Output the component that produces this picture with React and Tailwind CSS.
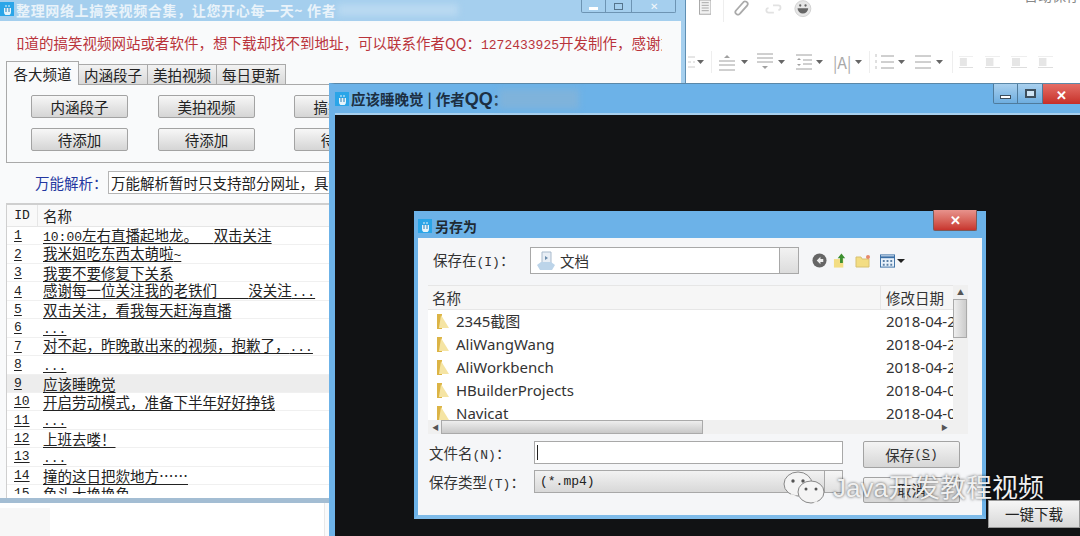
function WinIcon() {
  return (
    <div className="flex h-[14px] w-[14px] shrink-0 items-center justify-center bg-[#2aa5e8]">
      <svg width="9" height="11" viewBox="0 0 9 11">
        <path d="M1 4h7v4a3 3 0 0 1-7 0z" fill="#e6f4fb" />
        <path d="M3 4v4M6 4v4" stroke="#2a7fb5" strokeWidth="1" />
        <path d="M3 1v2M6 1v2" stroke="#e6f4fb" strokeWidth="1" />
      </svg>
    </div>
  );
}

function Mixed({ text }) {
  const parts = text.split(/([\x20-\x7e]+)/).filter(Boolean);
  return (
    <>
      {parts.map((p, i) =>
        /^[\x20-\x7e]+$/.test(p) ? (
          <span key={i} className="font-['Liberation_Mono',monospace] text-[13px]">{p}</span>
        ) : (
          <span key={i}>{p}</span>
        )
      )}
    </>
  );
}

function GrayBtn({ children, className }) {
  return (
    <div className={"flex h-[23px] w-[97px] shrink-0 items-center justify-center rounded-[2px] border border-[#a3a3a3] bg-gradient-to-b from-[#f7f7f7] to-[#d5d5d5] text-[14.5px] text-[#222] " + (className || "")}>
      {children}
    </div>
  );
}

const rows = [
  ["1", "10:00左右直播起地龙。  双击关注"],
  ["2", "我米姐吃东西太萌啦~"],
  ["3", "我要不要修复下关系"],
  ["4", "感谢每一位关注我的老铁们    没关注..."],
  ["5", "双击关注，看我每天赶海直播"],
  ["6", "..."],
  ["7", "对不起，昨晚敢出来的视频，抱歉了，..."],
  ["8", "..."],
  ["9", "应该睡晚觉"],
  ["10", "开启劳动模式，准备下半年好好挣钱"],
  ["11", "..."],
  ["12", "上班去喽！"],
  ["13", "..."],
  ["14", "撞的这日把欻地方⋯⋯"],
  ["15", "鱼头大换换鱼"],
];

function LeftWindow() {
  return (
    <div className="absolute left-0 top-0 h-[536px] w-[686px] overflow-hidden border-r border-r-[#5f8fb3]">
      <div className="flex h-full flex-col overflow-hidden border-r-4 border-r-[#a5cfee] bg-[#f9fafb]">
        <div className="flex h-[21px] shrink-0 items-start bg-[#a5cfee]">
          <div className="mt-[2px]"><WinIcon /></div>
          <span className="ml-[2px] mt-[1px] whitespace-nowrap text-[14px] font-bold leading-[18px] tracking-[0.65px] text-[#e9f3fa]">整理网络上搞笑视频合集，让您开心每一天~ 作者</span>
          <div className="ml-[2px] mt-[4px] h-[12px] w-[120px] bg-[#b9d9f1] blur-[3px]" />
          <div className="ml-auto mr-[5px] flex items-start">
            <div className="flex h-[13px] w-[25px] items-end justify-center rounded-bl-[2px] border border-t-0 border-[#6d94b3] bg-[#a5cfee] pb-[2px]"><div className="h-[3px] w-[9px] bg-white" /></div>
            <div className="flex h-[13px] w-[26px] items-center justify-center border border-l-0 border-t-0 border-[#6d94b3] bg-[#a5cfee]"><div className="h-[7px] w-[9px] border border-[#55748c]" /></div>
            <div className="flex h-[13px] w-[44px] items-center justify-center rounded-br-[2px] border border-l-0 border-t-0 border-[#6d94b3] bg-[#a5cfee] text-[10px] leading-none text-[#f2f7fb]">✕</div>
          </div>
        </div>
        <div className="ml-[17px] mt-[13px] h-[17px] w-[645px] shrink-0 overflow-hidden whitespace-nowrap text-[14.5px] leading-[17px] text-[#b9343b]">
          <div className="-ml-[7px]">知道的搞笑视频网站或者软件，想下载却找不到地址，可以联系作者QQ：<span className="font-['Liberation_Mono',monospace] text-[13px]">1272433925</span>开发制作，感谢支持</div>
        </div>
        <div className="ml-[6px] mt-[10px] flex h-[24px] shrink-0 items-end">
          <div className="relative z-10 flex h-[24px] w-[73px] items-center justify-center border border-b-0 border-[#a9a9a9] bg-[#f9fafb] text-[14.5px] text-[#222]">各大频道</div>
          {["内涵段子", "美拍视频", "每日更新"].map((t) => (
            <div key={t} className="flex h-[21px] w-[69px] items-center justify-center border border-l-0 border-[#a9a9a9] bg-gradient-to-b from-[#f2f2f2] to-[#d9d9d9] text-[14.5px] text-[#222]">{t}</div>
          ))}
        </div>
        <div className="-mt-px ml-[6px] h-[79px] w-[600px] shrink-0 border border-[#a9a9a9] pl-[24px] pt-[10px]">
          <div className="flex gap-[30px]">
            <GrayBtn>内涵段子</GrayBtn>
            <GrayBtn>美拍视频</GrayBtn>
            <GrayBtn className="ml-[9px]">搞笑视频</GrayBtn>
          </div>
          <div className="mt-[10px] flex gap-[30px]">
            <GrayBtn>待添加</GrayBtn>
            <GrayBtn>待添加</GrayBtn>
            <GrayBtn className="ml-[9px]">待添加</GrayBtn>
          </div>
        </div>
        <div className="ml-[35px] mt-[8px] flex shrink-0 items-center">
          <span className="w-[73px] whitespace-nowrap text-[14.5px] text-[#2437a0]">万能解析：</span>
          <div className="h-[23px] w-[400px] overflow-hidden whitespace-nowrap border border-[#b5b5b5] bg-white pl-[2px] text-[14.5px] leading-[21px] text-[#222]">万能解析暂时只支持部分网址，具体支持网址请看说明</div>
        </div>
        <div className="ml-[6px] mt-[9px] shrink-0 border-l border-t-2 border-[#cfcfcf] bg-white pb-[4px]">
          <div className="flex h-[22px] items-center border-b border-[#e6e6e6] bg-[#f9f9f9] text-[14.5px] text-[#222]">
            <div className="flex h-full w-[31px] items-center justify-center border-r border-[#e6e6e6] font-['Liberation_Mono',monospace] text-[13px]">ID</div>
            <div className="pl-[5px]">名称</div>
          </div>
          <div className="h-[267px] overflow-hidden">
            {rows.map(([id, name]) => (
              <div key={id} className={id === "9" ? "flex h-[18.45px] items-center border-b border-[#f0f0f0] bg-[#ededed] text-[14.5px] leading-[17px] text-[#222]" : "flex h-[18.45px] items-center border-b border-[#f0f0f0] text-[14.5px] leading-[17px] text-[#222]"}>
                <div className="w-[31px] pl-[7px] font-['Liberation_Mono',monospace] text-[13px] underline underline-offset-[2px]">{id}</div>
                <div className="whitespace-pre pl-[5px] underline underline-offset-[2px]"><Mixed text={name} /></div>
              </div>
            ))}
          </div>
        </div>
        <div className="h-[5px] shrink-0 bg-[#a3bdd3]" />
        <div className="h-full w-[325px] border-r border-[#e8e8e8] bg-white pt-[5px]">
          <div className="h-full w-[50px] bg-[#f7f7f7]" />
        </div>
      </div>
    </div>
  );
}

function Caret({ className }) {
  return (
    <svg width="7" height="4" viewBox="0 0 7 4" className={className}>
      <path d="M0 0h7L3.500 4z" fill="#666" />
    </svg>
  );
}

function Sep({ className }) {
  return <div className={"h-[22px] w-px bg-[#eee] " + className} />;
}

function Toolbar() {
  const c = "#a0a0a0";
  return (
    <div className="absolute left-[686px] top-0 h-[83px] w-[394px] overflow-hidden bg-white">
      <div className="flex h-[20px] items-start">
        <svg width="14" height="16" viewBox="0 0 14 16" className="ml-[13px]">
          <rect x="0.500" y="-1" width="13" height="16" fill="#f2f2f2" stroke={c} />
          <path d="M3 2h8M3 5h8M3 8h8M3 11h8" stroke={c} />
        </svg>
        <div className="ml-[12px] h-[22px] w-px bg-[#eee]" />
        <svg width="17" height="17" viewBox="0 0 17 17" className="ml-[10px]">
          <path d="M2 11l8-9a2.800 2.800 0 0 1 5 3l-8 9a2.500 2.500 0 0 1-5-3z" fill="none" stroke="#aaa" strokeWidth="2" />
        </svg>
        <svg width="19" height="14" viewBox="0 0 19 14" className="ml-[16px] mt-[2px]">
          <path d="M9 3h6a2.500 2.500 0 0 1 0 5M10 11H4a2.500 2.500 0 0 1 0-5" fill="none" stroke="#e2e2e2" strokeWidth="2" />
        </svg>
        <svg width="20" height="19" viewBox="0 0 20 19" className="ml-[12px]">
          <circle cx="10" cy="8.500" r="9" fill="#e6e6e6" stroke="#cfcfcf" />
          <circle cx="7" cy="5" r="1.300" fill="#666" />
          <circle cx="13" cy="5" r="1.300" fill="#666" />
          <path d="M4 8h12a6 6 0 0 1-12 0z" fill="#666" />
        </svg>
        <span className="ml-[212px] -mt-[14px] whitespace-nowrap text-[14px] leading-[18px] text-[#888]">日动保存</span>
      </div>
      <div className="mt-[31px] flex h-[22px] items-center">
        <svg width="8" height="16" viewBox="0 0 8 16" className="ml-px"><path d="M1 3h7M1 8h3M6 8h2M1 13h7" stroke="#ccc" /></svg>
        <Caret className="ml-[2px]" />
        <Sep className="ml-[7px]" />
        <svg width="16" height="18" viewBox="0 0 16 18" className="ml-[7px]"><path d="M0 8h16M0 12h16M0 17h16" stroke={c} /><path d="M8 2l3 3H5z" fill={c} /></svg>
        <Caret className="ml-[6px]" />
        <svg width="16" height="18" viewBox="0 0 16 18" className="ml-[9px]"><path d="M0 1h16M0 5h16M0 9h16" stroke={c} /><path d="M5 13h6l-3 3z" fill={c} /></svg>
        <Caret className="ml-[5px]" />
        <svg width="16" height="16" viewBox="0 0 16 16" className="ml-[11px]"><path d="M0 1h16M7 6h9M7 10h9M0 15h16" stroke={c} /><path d="M3 4l2 2H1zM3 12l2-2H1z" fill={c} /></svg>
        <Caret className="ml-[4px]" />
        <span className="ml-[10px] w-[17px] whitespace-nowrap text-[16px] leading-none text-[#a8a8a8]">|A|</span>
        <Caret className="ml-[5px]" />
        <Sep className="ml-[7px]" />
        <svg width="19" height="18" viewBox="0 0 19 18" className="ml-[5px]"><path d="M6 3h13M6 9h13M6 15h13" stroke={c} /><path d="M1 1v3M1 7v3M1 13v3" stroke="#c0c0c0" /></svg>
        <Caret className="ml-[4px]" />
        <svg width="16" height="14" viewBox="0 0 16 14" className="ml-[10px]"><path d="M0 1h16M0 7h16M0 13h16" stroke={c} /></svg>
        <Caret className="ml-[5px]" />
        <Sep className="ml-[9px]" />
        {[["ml-[6px]", 14], ["ml-[12px]", 15], ["ml-[11px]", 16], ["ml-[11px]", 15]].map(([m, w], i) => (
          <svg key={i} width={w} height="12" viewBox="0 0 16 12" className={m} preserveAspectRatio="none">
            <rect x="1" y="2" width="8" height="8" fill="#e6e6e6" />
            <path d="M0 0h16M0 11.500h16" stroke="#ddd" />
          </svg>
        ))}
      </div>
    </div>
  );
}

function SaveDialog() {
  const files = ["2345截图", "AliWangWang", "AliWorkbench", "HBuilderProjects", "Navicat"];
  const dates = ["2018-04-2", "2018-04-2", "2018-04-2", "2018-04-0", "2018-04-0"];
  return (
    <div className="absolute left-[414px] top-[211px] h-[308px] w-[572px] border-x-4 border-b-4 border-[#6cb2e8] border-b-[#7fbcea] bg-[#f5f6f8]">
      <div className="-mx-[2px] flex h-[27px] items-start bg-[#6cb2e8] pl-[2px] pt-[8px]">
        <WinIcon />
        <span className="ml-[3px] text-[14px] font-bold leading-[14px] text-[#1f2a33]">另存为</span>
        <div className="ml-auto mr-[7px] -mt-[9px] flex h-[21px] w-[44px] items-center justify-center rounded-b-[2px] border border-t-0 border-[#7a5a5a] bg-gradient-to-b from-[#e7928c] to-[#c7332d] text-[13px] font-bold text-white">✕</div>
      </div>
      <div className="mt-[9px] flex h-[27px] items-center pl-[15px]">
        <span className="w-[97px] whitespace-nowrap text-[14.5px] text-[#333]"><Mixed text="保存在(I)：" /></span>
        <div className="flex h-[27px] w-[269px] items-center border border-[#a8a8a8] bg-white">
          <svg width="22" height="20" viewBox="0 0 22 20" className="ml-[4px]">
            <path d="M7 1h9v12H7z" fill="#e8eef5" stroke="#a9bbcd" />
            <path d="M2 14l4-3h10l4 3-3 5H5z" fill="#bcd4e9" />
            <path d="M10 5l3 2-3 2z" fill="#6a8cac" />
          </svg>
          <span className="ml-[3px] text-[14.5px] text-[#333]">文档</span>
          <div className="ml-auto h-full w-[19px] border-l border-[#a8a8a8] bg-gradient-to-b from-[#f2f2f2] to-[#dcdcdc]" />
        </div>
        <svg width="15" height="15" viewBox="0 0 16 16" className="ml-[13px]"><circle cx="8" cy="8" r="7.500" fill="#666" /><path d="M9 4L5 8l4 4v-2.500h3v-3H9z" fill="#eee" /></svg>
        <svg width="15" height="16" viewBox="0 0 16 16" className="ml-[6px]"><path d="M1 6h10v9H1z" fill="#f3dd83" /><path d="M9 0l4 5h-2.500v5h-3V5H5z" fill="#3c8f2f" /></svg>
        <svg width="16" height="14" viewBox="0 0 16 14" className="ml-[7px]"><path d="M1 3h5l1 2h7v8H1z" fill="#f3dd83" stroke="#d8c170" /><circle cx="13" cy="3" r="2" fill="#e58a6a" /></svg>
        <svg width="15" height="14" viewBox="0 0 16 14" className="ml-[9px]"><rect x="0.500" y="0.500" width="15" height="13" fill="#e8f1fa" stroke="#3a6ea5" /><path d="M0 3h16" stroke="#3a6ea5" strokeWidth="2" /><path d="M3 6h2v2H3zM7 6h2v2H7zM11 6h2v2h-2zM3 10h2v2H3zM7 10h2v2H7zM11 10h2v2h-2z" fill="#5a7fa5" /></svg>
        <div className="ml-[2px] h-0 w-0 border-x-[4px] border-t-[4px] border-x-transparent border-t-[#222]" />
      </div>
      <div className="ml-[10px] mt-[11px] w-[540px]">
        <div className="relative h-[135px] overflow-hidden bg-white">
          <div className="flex h-[25px] border-y border-[#e6e6e6] bg-[#f6f6f6]">
            <div className="w-[452px] pl-[4px] text-[14.5px] leading-[23px] text-[#333]">名称</div>
            <div className="w-[73px] border-l border-[#e6e6e6] pl-[5px] text-[14.5px] leading-[23px] text-[#333]">修改日期</div>
          </div>
          {files.map((f, i) => (
            <div key={f} className="flex h-[23px] items-center font-['Noto_Sans','Noto_Sans_CJK_SC',sans-serif] text-[15px] text-[#333]">
              <div className="flex w-[452px] items-center pl-[7px]">
                <svg width="15" height="18" viewBox="0 0 15 18"><path d="M2 1h5v15H2z" fill="#dcb445" /><path d="M6 2l8 13H4z" fill="#f5e4a3" /></svg>
                <span className="ml-[6px] whitespace-nowrap">{f}</span>
              </div>
              <div className="w-[73px] overflow-hidden whitespace-nowrap pl-[6px]">{dates[i]}</div>
            </div>
          ))}
          <div className="absolute right-0 top-0 flex h-full w-[15px] flex-col bg-[#f0f0f0]">
            <div className="mx-auto mt-[4px] text-[7px] leading-none text-[#555]">▲</div>
            <div className="mt-[3px] h-[39px] w-[14px] border border-[#aaa] bg-gradient-to-r from-[#eee] to-[#ccc]" />
          </div>
        </div>
        <div className="flex h-[14px] items-center bg-[#f0f0f0]">
          <span className="w-[13px] pl-[4px] text-[7px] leading-none text-[#555]">◀</span>
          <div className="h-[14px] w-[262px] border border-[#aaa] bg-gradient-to-b from-[#eee] to-[#c8c8c8]" />
          <span className="ml-auto pr-[20px] text-[7px] leading-none text-[#555]">▶</span>
        </div>
      </div>
      <div className="mt-[7px] flex h-[29px] items-start pl-[11px]">
        <div className="w-[105px] text-[14.5px] leading-[23px] text-[#333]"><Mixed text="文件名(N)：" /></div>
        <div className="flex h-[23px] w-[309px] items-center border border-[#a8a8a8] bg-white pl-[2px]"><div className="h-[15px] w-px bg-[#222]" /></div>
        <div className="ml-[20px] flex h-[27px] w-[97px] items-center justify-center rounded-[2px] border border-[#a3a3a3] bg-gradient-to-b from-[#f4f4f4] to-[#d6d6d6] text-[14.5px] text-[#333]"><Mixed text="保存(" /><span className="font-['Liberation_Mono',monospace] text-[13px] underline">S</span><Mixed text=")" /></div>
      </div>
      <div className="flex items-start pl-[11px]">
        <div className="w-[105px] text-[14.5px] leading-[23px] text-[#333]"><Mixed text="保存类型(T)：" /></div>
        <div className="flex h-[23px] w-[309px] items-center border border-[#a8a8a8] bg-gradient-to-b from-[#f2f2f2] to-[#d8d8d8] pl-[5px] font-['Liberation_Mono',monospace] text-[13px] text-[#222]">
          (*.mp4)
          <div className="ml-auto h-full w-[18px] border-l border-[#a8a8a8] bg-gradient-to-b from-[#f6f6f6] to-[#e0e0e0]" />
        </div>
        <div className="ml-[20px] mt-[7px] flex h-[26px] w-[97px] items-center justify-center rounded-[2px] border border-[#a3a3a3] bg-gradient-to-b from-[#f4f4f4] to-[#d6d6d6] text-[14.5px] text-[#333]">取消</div>
      </div>
    </div>
  );
}

function Watermark() {
  return (
    <div className="absolute left-[783px] top-[470px] flex items-center">
      <svg width="44" height="36" viewBox="0 0 44 36">
        <ellipse cx="15" cy="14" rx="14" ry="12" fill="#f4f4f4" stroke="#888" />
        <path d="M8 24l-2 6 8-4z" fill="#f4f4f4" />
        <circle cx="10" cy="11" r="1.700" fill="#555" />
        <circle cx="20" cy="11" r="1.700" fill="#555" />
        <ellipse cx="28" cy="22" rx="13" ry="11" fill="#f4f4f4" stroke="#888" />
        <path d="M34 31l3 5-7-3z" fill="#f4f4f4" />
        <circle cx="23" cy="19" r="1.500" fill="#555" />
        <circle cx="33" cy="19" r="1.500" fill="#555" />
      </svg>
      <span className="ml-[6px] whitespace-nowrap font-['Liberation_Sans','Noto_Sans_CJK_SC',sans-serif] text-[26px] leading-none text-[#f0f0f0] [text-shadow:0_0_3px_rgba(0,0,0,0.7)]">Java开发教程视频</span>
    </div>
  );
}

export default function App() {
  return (
    <div className="relative h-[536px] w-[1080px] overflow-hidden bg-white font-['Noto_Sans_CJK_SC','Liberation_Sans',sans-serif]">
      <LeftWindow />
      <Toolbar />
      <div className="absolute left-[329px] top-[83px] h-[453px] w-[751px] overflow-hidden border-l-[6px] border-t border-l-[#6cb2e8] border-t-[#5b88a8] bg-[#111214]">
        <div className="-ml-[6px] flex h-[31px] items-start border-b-[2px] border-[#a8d0ee] bg-[#6cb2e8] pl-[6px] pt-[8px]">
          <WinIcon />
          <span className="ml-[2px] mt-[-2px] whitespace-nowrap text-[14.5px] font-bold leading-[18px] text-[#1c2f42]">应该睡晚觉<span className="mx-[4px]">|</span>作者<span className="font-['Liberation_Sans'] text-[18px]">QQ</span>：</span>
          <div className="-ml-[8px] mt-[-3px] h-[20px] w-[80px] bg-[#7fb3db] blur-[3px]" />
          <div className="ml-auto -mt-[8px] flex h-[20px] items-start">
            <div className="flex h-[20px] w-[25px] items-end justify-center rounded-bl-[2px] border border-t-0 border-[#4f7b9c] bg-gradient-to-b from-[#a9d0ee] to-[#6eaee0] pb-[4px]">
              <div className="h-[4px] w-[11px] border border-[#3d4e5c] bg-white" />
            </div>
            <div className="flex h-[20px] w-[25px] items-center justify-center border border-l-0 border-t-0 border-[#4f7b9c] bg-gradient-to-b from-[#a9d0ee] to-[#6eaee0]">
              <div className="h-[9px] w-[11px] border-2 border-[#3d4e5c] bg-[#cfe4f4]" />
            </div>
            <div className="flex h-[20px] w-[37px] items-center justify-center bg-gradient-to-b from-[#e46d66] to-[#c62d27] text-[13px] font-bold leading-none text-white">✕</div>
          </div>
        </div>
      </div>
      <SaveDialog />
      <Watermark />
      <div className="absolute left-[988px] top-[500px] flex h-[28px] w-[92px] items-center justify-center border border-[#999] bg-gradient-to-b from-[#f6f6f6] to-[#d8d8d8] text-[14.5px] text-[#222]">一键下载</div>
    </div>
  );
}
